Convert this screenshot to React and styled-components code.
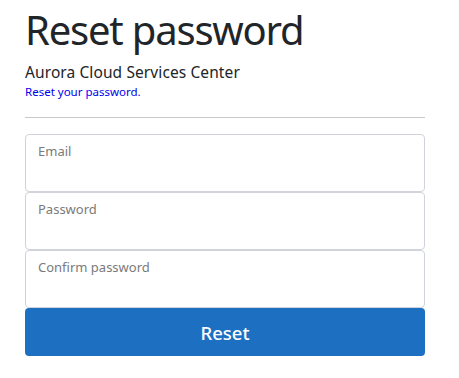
import React from 'react';
import styled, { createGlobalStyle } from 'styled-components';

const GlobalStyle = createGlobalStyle`
  body {
    margin: 0;
    background: #fff;
    font-family: "Noto Sans", "Noto Sans CJK KR", sans-serif;
    color: #212529;
  }
`;

const Page = styled.div`
  width: 400px;
  padding: 0 0 0 25px;
`;

const Heading = styled.h1`
  margin: 0;
  padding-top: 2px;
  font-size: 40px;
  font-weight: 400;
  line-height: 56px;
  letter-spacing: -1.2px;
`;

const Subtitle = styled.div`
  margin-top: 4px;
  font-size: 15.5px;
  line-height: 20px;
  letter-spacing: 0.1px;
`;

const HelpLink = styled.a`
  display: block;
  margin-top: 2px;
  font-size: 11.5px;
  line-height: 16px;
  color: #0000ee;
  text-decoration: none;
`;

const Divider = styled.hr`
  margin: 17px 0 16px;
  border: 0;
  border-top: 1px solid #c8c8c8;
`;

const Form = styled.form`
  display: flex;
  flex-direction: column;
`;

const Field = styled.label`
  display: block;
  height: 58px;
  box-sizing: border-box;
  border: 1px solid #d0d4da;
  border-radius: 4px;
  padding: 7px 12px;
  font-size: 13px;
  line-height: 18px;
  color: #7a7a7a;
  background: #fff;
`;

const Button = styled.button`
  height: 48px;
  border: 0;
  border-radius: 4px;
  background: #1d6fc2;
  color: #fff;
  font-family: inherit;
  font-size: 18.5px;
  font-weight: 500;
`;

export default function App() {
  return (
    <Page>
      <GlobalStyle />
      <Heading>Reset password</Heading>
      <Subtitle>Aurora Cloud Services Center</Subtitle>
      <HelpLink href="#">Reset your password.</HelpLink>
      <Divider />
      <Form onSubmit={(e) => e.preventDefault()}>
        <Field>Email</Field>
        <Field>Password</Field>
        <Field>Confirm password</Field>
        <Button type="submit">Reset</Button>
      </Form>
    </Page>
  );
}
